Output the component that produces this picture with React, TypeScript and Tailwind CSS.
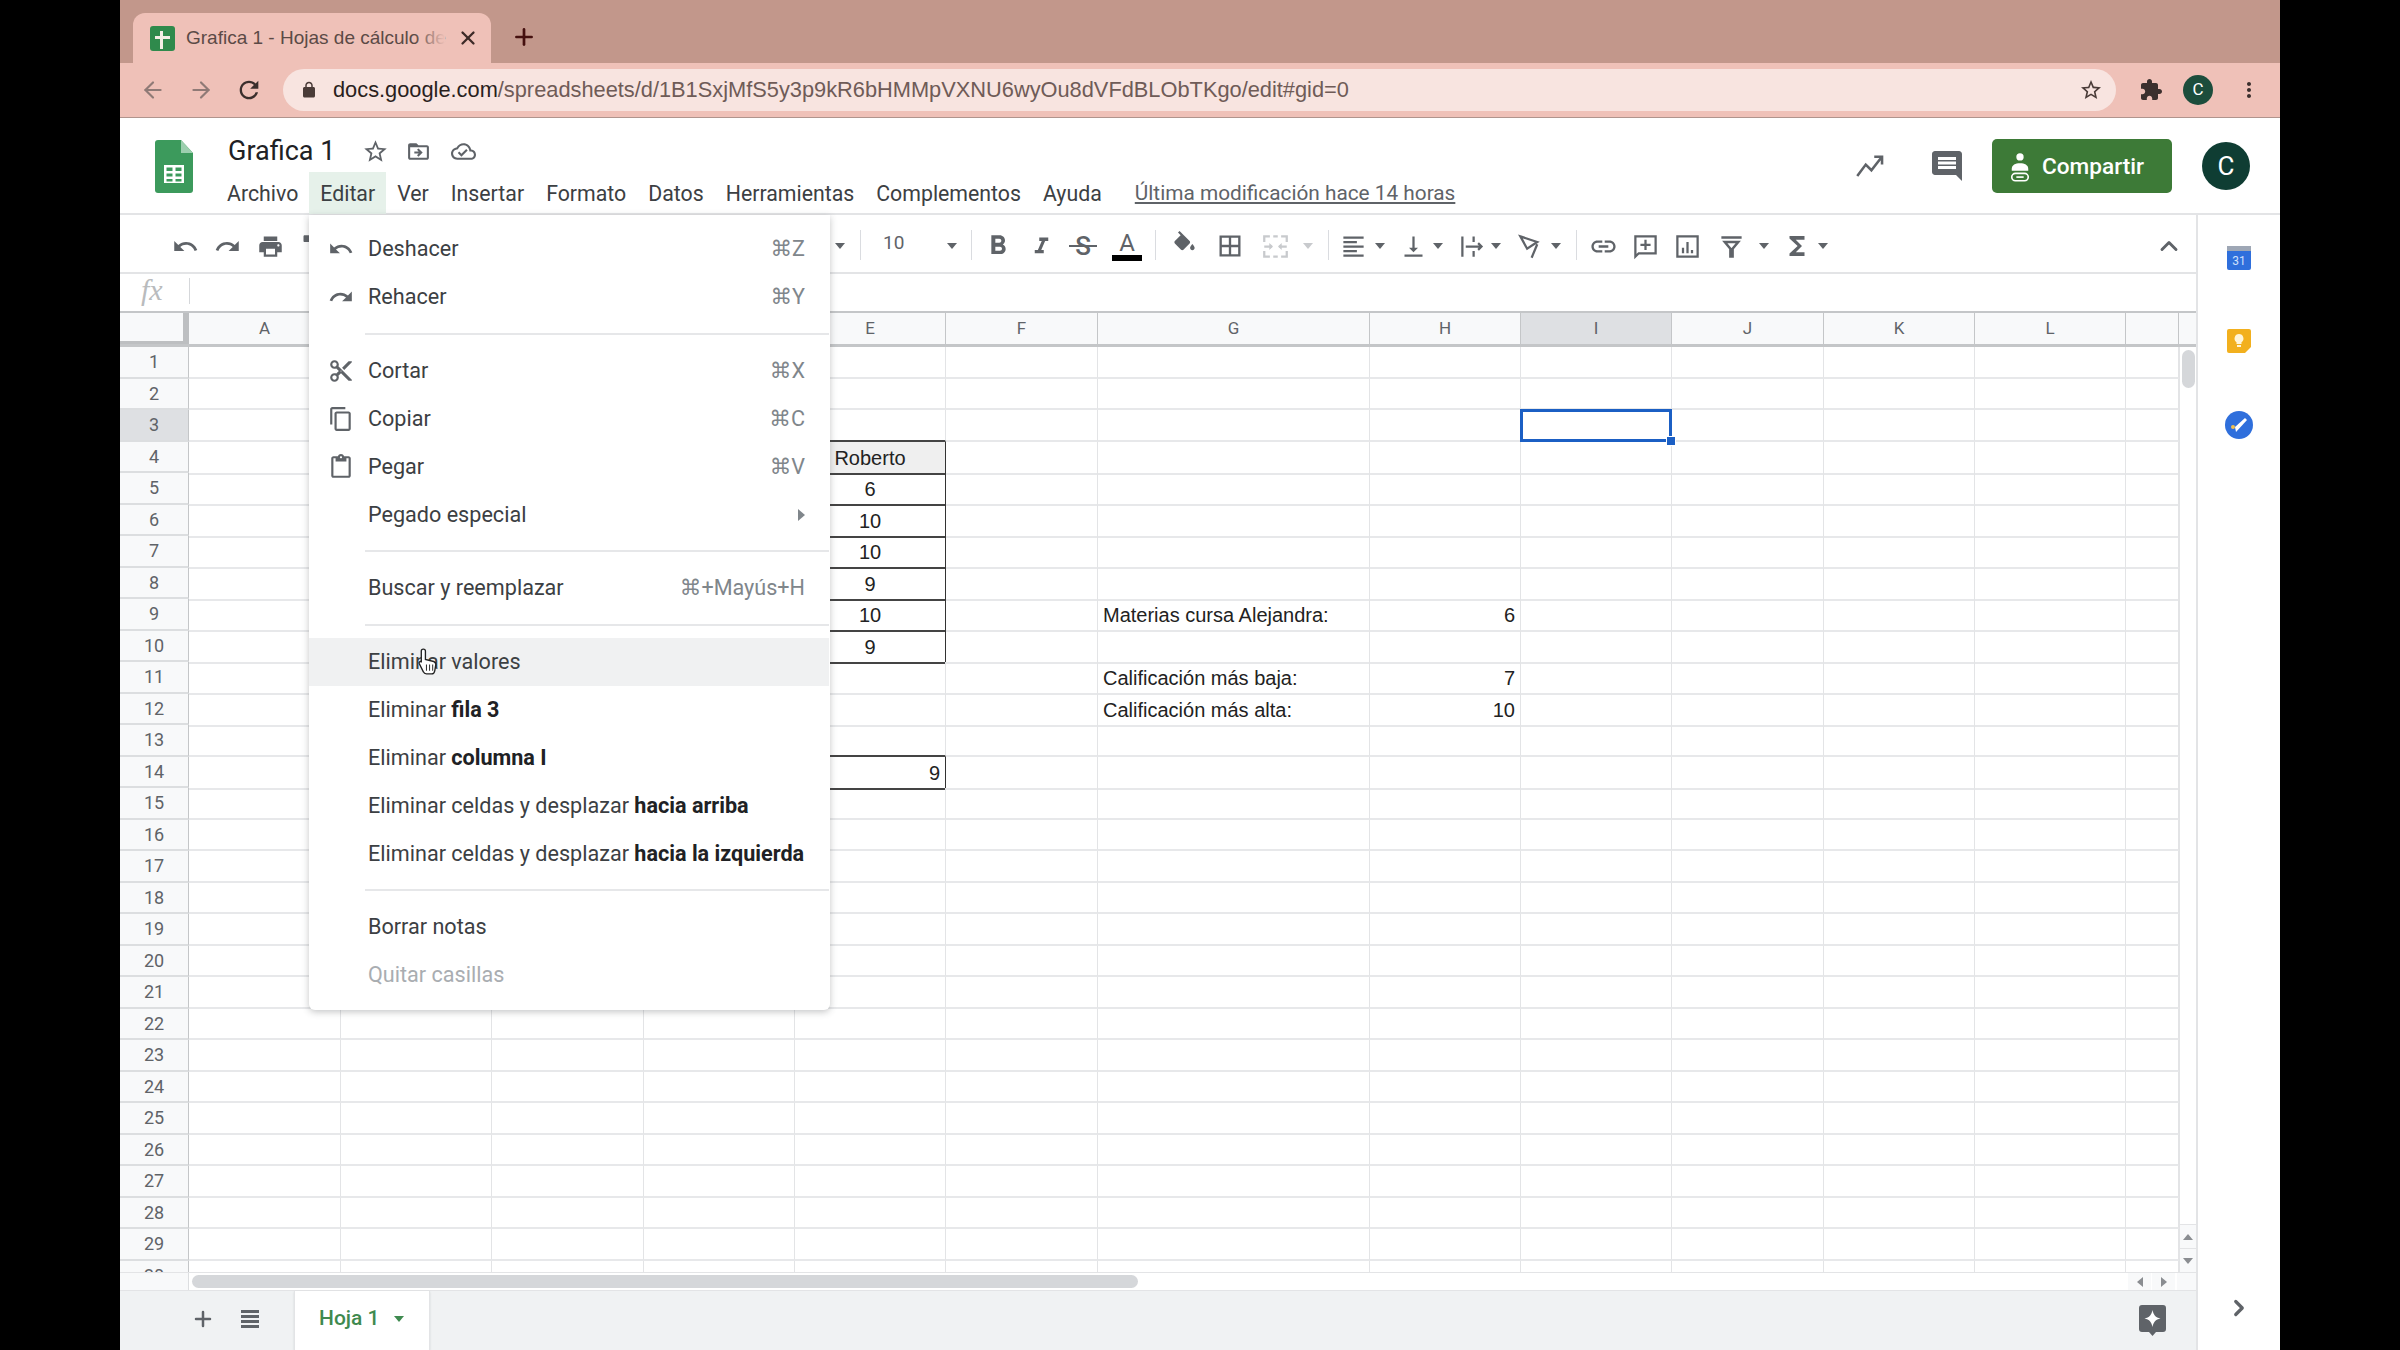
import React from 'react';
import { ArrowLeft, ArrowRight, ChevronRight, ChevronUp, Plus, X } from 'lucide-react';

const paths = {
  undo: 'M12.5 8c-2.65 0-5.05.99-6.9 2.6L2 7v9h9l-3.62-3.62c1.39-1.16 3.16-1.88 5.12-1.88 3.54 0 6.55 2.31 7.6 5.5l2.37-.78C21.08 11.03 17.15 8 12.5 8z',
  redo: 'M18.4 10.6C16.55 8.99 14.15 8 11.5 8c-4.65 0-8.58 3.03-9.96 7.22L3.9 16c1.05-3.19 4.05-5.5 7.6-5.5 1.95 0 3.73.72 5.12 1.88L13 16h9V7l-3.6 3.6z',
  print: 'M19 8H5c-1.66 0-3 1.34-3 3v6h4v4h12v-4h4v-6c0-1.66-1.34-3-3-3zm-3 11H8v-5h8v5zm3-7c-.55 0-1-.45-1-1s.45-1 1-1 1 .45 1 1-.45 1-1 1zm-1-9H6v4h12V3z',
  paint: 'M18 4V3c0-.55-.45-1-1-1H5c-.55 0-1 .45-1 1v4c0 .55.45 1 1 1h12c.55 0 1-.45 1-1V6h1v4H9v11c0 .55.45 1 1 1h2c.55 0 1-.45 1-1v-9h8V4h-3z',
  bold: 'M15.6 10.79c.97-.67 1.65-1.77 1.65-2.79 0-2.26-1.75-4-4-4H7v14h7.04c2.09 0 3.71-1.7 3.71-3.79 0-1.52-.86-2.82-2.15-3.42zM10 6.5h3c.83 0 1.5.67 1.5 1.5s-.67 1.5-1.5 1.5h-3v-3zm3.5 9H10v-3h3.5c.83 0 1.5.67 1.5 1.5s-.67 1.5-1.5 1.5z',
  italic: 'M10 4v3h2.21l-3.42 8H6v3h8v-3h-2.21l3.42-8H18V4z',
  fill: 'M16.56 8.94L7.62 0 6.21 1.41l2.38 2.38-5.15 5.15c-.59.59-.59 1.54 0 2.12l5.5 5.5c.29.29.68.44 1.06.44s.77-.15 1.06-.44l5.5-5.5c.59-.58.59-1.53 0-2.12zM19 11.5s-2 2.17-2 3.5c0 1.1.9 2 2 2s2-.9 2-2c0-1.33-2-3.5-2-3.5z',
  borders: 'M3 3v18h18V3H3zm8 16H5v-6h6v6zm0-8H5V5h6v6zm8 8h-6v-6h6v6zm0-8h-6V5h6v6z',
  align: 'M15 15H3v2h12v-2zm0-8H3v2h12V7zM3 13h18v-2H3v2zm0 8h18v-2H3v2zM3 3v2h18V3H3z',
  valign: 'M16 13h-3V3h-2v10H8l4 4 4-4zM4 19v2h16v-2H4z',
  link: 'M3.9 12c0-1.71 1.39-3.1 3.1-3.1h4V7H7c-2.76 0-5 2.24-5 5s2.24 5 5 5h4v-1.9H7c-1.71 0-3.1-1.39-3.1-3.1zM8 13h8v-2H8v2zm9-6h-4v1.9h4c1.71 0 3.1 1.39 3.1 3.1s-1.39 3.1-3.1 3.1h-4V17h4c2.76 0 5-2.24 5-5s-2.24-5-5-5z',
  sigma: 'M18 4H6v2l6.5 6L6 18v2h12v-3h-7l5-5-5-5h7z',
  comment: 'M21.99 4c0-1.1-.89-2-1.99-2H4c-1.1 0-2 .9-2 2v12c0 1.1.9 2 2 2h14l4 4-.01-18zM18 14H6v-2h12v2zm0-3H6V9h12v2zm0-3H6V6h12v2z',
  scissors: 'M9.64 7.64c.23-.5.36-1.05.36-1.64 0-2.21-1.79-4-4-4S2 3.79 2 6s1.79 4 4 4c.59 0 1.14-.13 1.64-.36L10 12l-2.36 2.36C7.14 14.13 6.59 14 6 14c-2.21 0-4 1.79-4 4s1.79 4 4 4 4-1.79 4-4c0-.59-.13-1.14-.36-1.64L12 14l7 7h3v-1L9.64 7.64zM6 8c-1.1 0-2-.89-2-2s.9-2 2-2 2 .89 2 2-.9 2-2 2zm0 12c-1.1 0-2-.89-2-2s.9-2 2-2 2 .89 2 2-.9 2-2 2zm6-7.5c-.28 0-.5-.22-.5-.5s.22-.5.5-.5.5.22.5.5-.22.5-.5.5zM19 3l-6 6 2 2 7-7V3z',
  copy: 'M16 1H4c-1.1 0-2 .9-2 2v14h2V3h12V1zm3 4H8c-1.1 0-2 .9-2 2v14c0 1.1.9 2 2 2h11c1.1 0 2-.9 2-2V7c0-1.1-.9-2-2-2zm0 16H8V7h11v14z',
  paste: 'M19 2h-4.18C14.4.84 13.3 0 12 0c-1.3 0-2.4.84-2.82 2H5c-1.1 0-2 .9-2 2v16c0 1.1.9 2 2 2h14c1.1 0 2-.9 2-2V4c0-1.1-.9-2-2-2zm-7 0c.55 0 1 .45 1 1s-.45 1-1 1-1-.45-1-1 .45-1 1-1zm7 18H5V4h2v3h10V4h2v16z',
  reload: 'M17.65 6.35C16.2 4.9 14.21 4 12 4c-4.42 0-7.99 3.58-7.99 8s3.57 8 7.99 8c3.73 0 6.84-2.55 7.73-6h-2.08c-.82 2.33-3.04 4-5.65 4-3.31 0-6-2.69-6-6s2.69-6 6-6c1.66 0 3.14.69 4.22 1.78L13 11h7V4l-2.35 2.35z',
  star: 'M22 9.24l-7.19-.62L12 2 9.19 8.63 2 9.24l5.46 4.73L5.82 21 12 17.27 18.18 21l-1.63-7.03L22 9.24zM12 15.4l-3.76 2.27 1-4.28-3.32-2.88 4.38-.38L12 6.1l1.71 4.04 4.38.38-3.32 2.88 1 4.28L12 15.4z',
  puzzle: 'M20.5 11H19V7c0-1.1-.9-2-2-2h-4V3.5C13 2.12 11.88 1 10.5 1S8 2.12 8 3.5V5H4c-1.1 0-1.99.9-1.99 2v3.8H3.5c1.49 0 2.7 1.21 2.7 2.7s-1.21 2.7-2.7 2.7H2V20c0 1.1.9 2 2 2h3.8v-1.5c0-1.49 1.21-2.7 2.7-2.7 1.49 0 2.7 1.21 2.7 2.7V22H17c1.1 0 2-.9 2-2v-4h1.5c1.38 0 2.5-1.12 2.5-2.5S21.88 11 20.5 11z',
  lock: 'M18 8h-1V6c0-2.76-2.24-5-5-5S7 3.24 7 6v2H6c-1.1 0-2 .9-2 2v10c0 1.1.9 2 2 2h12c1.1 0 2-.9 2-2V10c0-1.1-.9-2-2-2zM9 6c0-1.66 1.34-3 3-3s3 1.34 3 3v2H9V6z',
  cloud: 'M19.35 10.04C18.67 6.59 15.64 4 12 4 9.11 4 6.6 5.64 5.35 8.04 2.34 8.36 0 10.91 0 14c0 3.31 2.69 6 6 6h13c2.76 0 5-2.24 5-5 0-2.64-2.05-4.78-4.65-4.96zM19 18H6c-2.21 0-4-1.79-4-4 0-2.05 1.53-3.76 3.56-3.97l1.07-.11.5-.95C8.08 7.14 9.94 6 12 6c2.62 0 4.88 1.86 5.39 4.43l.3 1.5 1.53.11c1.56.1 2.78 1.41 2.78 2.96 0 1.65-1.35 3-3 3zm-9-3.82l-2.09-2.09L6.5 13.5 10 17l6.01-6.01-1.41-1.41z',
  folder: 'M20 6h-8l-2-2H4c-1.1 0-2 .9-2 2v12c0 1.1.9 2 2 2h16c1.1 0 2-.9 2-2V8c0-1.1-.9-2-2-2zm0 12H4V8h16v10zm-8.01-9l-1.41 1.41L12.16 12H8v2h4.16l-1.59 1.59L11.99 17 16 13.01 11.99 9z',
  more: 'M12 8c1.1 0 2-.9 2-2s-.9-2-2-2-2 .9-2 2 .9 2 2 2zm0 2c-1.1 0-2 .9-2 2s.9 2 2 2 2-.9 2-2-.9-2-2-2zm0 6c-1.1 0-2 .9-2 2s.9 2 2 2 2-.9 2-2-.9-2-2-2z',
};

function Icon({ d, className }: { d: string; className?: string }) {
  return (
    <svg viewBox="0 0 24 24" fill="currentColor" className={className}>
      <path d={d} />
    </svg>
  );
}

function Caret({ className = 'border-t-[#5f6368]' }: { className?: string }) {
  return <span className={`block w-0 h-0 border-x-[5px] border-x-transparent border-t-[6px] ${className}`} />;
}

function Tb({ className, children }: { className: string; children?: React.ReactNode }) {
  return <div className={`flex items-center justify-center h-full shrink-0 ${className}`}>{children}</div>;
}

function Sep({ className }: { className: string }) {
  return <div className={`w-px h-[30px] bg-[#dadce0] shrink-0 ${className}`} />;
}

function BrowserBar() {
  return (
    <>
      <div className="flex h-[63px] bg-[#c2978b] pl-[13px] pt-[13px] items-start">
        <div className="flex items-center w-[358px] h-[50px] bg-[#efc1b8] rounded-t-[12px] pl-[17px]">
          <svg viewBox="0 0 25 25" className="w-[25px] h-[25px]">
            <rect width="25" height="25" rx="3" fill="#2f8a4c" />
            <path d="M10 5h3v5h7v3h-7v10h-3V13H5v-3h5z" fill="#f3eee6" />
          </svg>
          <div className="relative w-[259px] ml-[11px] whitespace-nowrap text-[19px] text-[#5b4a46] font-['Liberation_Sans',sans-serif]">
            Grafica 1 - Hojas de cálculo de
            <div className="absolute right-0 top-0 bottom-0 w-[30px] bg-gradient-to-r from-transparent to-[#efc1b8]" />
          </div>
          <X className="w-[22px] h-[22px] ml-[12px] text-[#3d2a27]" strokeWidth={2.5} />
        </div>
        <Plus className="w-[26px] h-[26px] ml-[20px] mt-[11px] text-[#45100f]" strokeWidth={2.5} />
      </div>
      <div className="flex items-center h-[55px] bg-[#efc1b8] pl-[9px] border-b border-[#b0948d]">
        <Tb className="w-[48px]"><ArrowLeft className="w-[26px] h-[26px] text-[#8f7a76]" /></Tb>
        <Tb className="w-[48px]"><ArrowRight className="w-[26px] h-[26px] text-[#8f7a76]" /></Tb>
        <Tb className="w-[48px]"><Icon d={paths.reload} className="w-[28px] h-[28px] text-[#3b2f2d]" /></Tb>
        <div className="flex items-center w-[1833px] h-[42px] ml-[10px] rounded-full bg-[#f8e4e0] pl-[17px] pr-[13px]">
          <Icon d={paths.lock} className="w-[18px] h-[18px] text-[#4a3b38]" />
          <div className="ml-[15px] text-[21.8px] text-[#6f5b57] whitespace-nowrap font-['Liberation_Sans',sans-serif]">
            <span className="text-[#2a1f1d]">docs.google.com</span>/spreadsheets/d/1B1SxjMfS5y3p9kR6bHMMpVXNU6wyOu8dVFdBLObTKgo/edit#gid=0
          </div>
          <Icon d={paths.star} className="w-[24px] h-[24px] ml-auto text-[#4a3b38]" />
        </div>
        <Tb className="w-[48px] ml-[11px]"><Icon d={paths.puzzle} className="w-[24px] h-[24px] text-[#3b2f2d]" /></Tb>
        <Tb className="w-[46px]">
          <div className="flex items-center justify-center w-[30px] h-[30px] rounded-full bg-[#1c4d3c] text-white text-[17px] font-['Roboto',sans-serif]">C</div>
        </Tb>
        <Tb className="w-[46px] ml-[5px]"><Icon d={paths.more} className="w-[24px] h-[24px] text-[#3b2f2d]" /></Tb>
      </div>
    </>
  );
}

const menuBar = ['Archivo', 'Editar', 'Ver', 'Insertar', 'Formato', 'Datos', 'Herramientas', 'Complementos', 'Ayuda'];

function DocsHeader() {
  return (
    <div className="flex items-start h-[97px] bg-white border-b-2 border-[#e3e4e6] pl-[35px] font-['Roboto',sans-serif]">
      <svg viewBox="0 0 38 53" className="w-[38px] h-[53px] mt-[22px] shrink-0">
        <path d="M3 0h23l12 13v37a3 3 0 0 1-3 3H3a3 3 0 0 1-3-3V3a3 3 0 0 1 3-3z" fill="#3c9a5c" />
        <path d="M26 0l12 13H26z" fill="#9ccfae" />
        <path d="M9 25h20v18H9zm2.500 2.500v3.500h6v-3.500zm9 0v3.500h6v-3.500zm-9 6v3h6v-3zm9 0v3h6v-3zm-9 5.500v2.500h6V39zm9 0v2.500h6V39z" fill="#ffffff" fillRule="evenodd" />
      </svg>
      <div className="ml-[23px] pt-[13px]">
        <div className="flex items-center h-[40px] pl-[12px]">
          <span className="text-[27px] text-[#202124]">Grafica 1</span>
          <Icon d={paths.star} className="w-[27px] h-[27px] ml-[27px] text-[#5f6368]" />
          <Icon d={paths.folder} className="w-[25px] h-[25px] ml-[17px] text-[#5f6368]" />
          <Icon d={paths.cloud} className="w-[25px] h-[25px] ml-[20px] text-[#5f6368]" />
        </div>
        <div className="flex items-center h-[42px] mt-px text-[21.3px] text-[#3c4043]">
          {menuBar.map((m) => (
            <div key={m} className={`flex items-center h-full px-[11px] pt-[2px] ${m === 'Editar' ? 'bg-[#e6f1ea]' : ''}`}>{m}</div>
          ))}
          <span className="ml-[22px] pt-[2px] underline text-[20.8px] text-[#5f6368]">Última modificación hace 14 horas</span>
        </div>
      </div>
      <div className="flex items-center ml-auto mt-[21px]">
        <Tb className="w-[48px] h-[54px]">
          <svg viewBox="0 0 24 24" className="w-[34px] h-[34px] text-[#5f6368]" fill="none" stroke="currentColor" strokeWidth="1.800">
            <path d="M3 19l6-8 4 4 7-9M15 5.500h5.500V11" />
          </svg>
        </Tb>
        <Tb className="w-[48px] h-[54px] ml-[29px]"><Icon d={paths.comment} className="w-[36px] h-[36px] text-[#5f6368]" /></Tb>
        <div className="flex items-center w-[180px] h-[54px] ml-[21px] rounded-[5px] bg-[#3d7a37] pl-[17px] pt-px text-white text-[22.6px] font-medium">
          <svg viewBox="0 0 24 32" className="w-[22px] h-[30px] mr-[11px]" fill="#ffffff">
            <circle cx="12" cy="5" r="4" />
            <path d="M3 18c0-4 4-6 9-6s9 2 9 6v2H3z" />
            <rect x="3" y="23" width="18" height="8" rx="4" fill="none" stroke="#ffffff" strokeWidth="1.800" />
            <path d="M8 27h8" stroke="#ffffff" strokeWidth="1.800" />
          </svg>
          Compartir
        </div>
        <div className="flex items-center justify-center w-[48px] h-[48px] ml-[30px] mr-[30px] rounded-full bg-[#0f3d33] text-white text-[26px]">C</div>
      </div>
    </div>
  );
}

function Toolbar() {
  const ic = 'w-[27px] h-[27px] text-[#5f6368]';
  return (
    <div className="flex items-center h-[59px] border-b-2 border-[#e3e4e6] pl-[44px] pr-[7px] pt-[5px] font-['Roboto',sans-serif]">
      <Tb className="w-[42px]"><Icon d={paths.undo} className={ic} /></Tb>
      <Tb className="w-[43px]"><Icon d={paths.redo} className={ic} /></Tb>
      <Tb className="w-[42px]"><Icon d={paths.print} className={ic} /></Tb>
      <Tb className="w-[42px]"><Icon d={paths.paint} className={ic} /></Tb>
      <Tb className="w-[499px]" />
      <Tb className="w-[16px]"><Caret /></Tb>
      <Sep className="ml-[12px] -mt-[3px]" />
      <Tb className="w-[82px] justify-start pl-[22px] pb-[5px] text-[19px] text-[#5f6368]">10</Tb>
      <Tb className="w-[18px]"><Caret /></Tb>
      <Sep className="ml-[10px] -mt-[3px]" />
      <Tb className="w-[44px] ml-[4px]"><Icon d={paths.bold} className="w-[32px] h-[32px] text-[#5f6368]" /></Tb>
      <Tb className="w-[42px]"><Icon d={paths.italic} className={ic} /></Tb>
      <Tb className="w-[42px]">
        <div className="relative flex items-center justify-center text-[26px] leading-none font-medium text-[#5f6368]">
          S
          <span className="absolute left-[-6px] right-[-6px] top-[12px] h-[2px] bg-[#5f6368]" />
        </div>
      </Tb>
      <Tb className="w-[46px] flex-col">
        <span className="text-[24px] leading-[24px] text-[#5f6368]">A</span>
        <span className="block w-[30px] h-[6px] bg-black" />
      </Tb>
      <Sep className="ml-[5px] -mt-[3px]" />
      <Tb className="w-[44px] ml-[6px] pb-[3px]"><Icon d={paths.fill} className={ic} /></Tb>
      <Tb className="w-[48px]"><Icon d={paths.borders} className="w-[28px] h-[28px] text-[#5f6368]" /></Tb>
      <Tb className="w-[42px]">
        <svg viewBox="0 0 24 24" className="w-[27px] h-[27px] text-[#c8cacd]" fill="none" stroke="currentColor" strokeWidth="2">
          <path d="M2 8V3h5M17 3h5v5M2 16v5h5M17 21h5v-5M10 3h4M10 21h4M2 12h7M22 12h-7" />
          <path d="M9 12l-2-2v4zM15 12l2-2v4z" fill="currentColor" strokeWidth="1" />
        </svg>
      </Tb>
      <Tb className="w-[24px]"><Caret className="border-t-[#c8cacd]" /></Tb>
      <Sep className="ml-[8px] -mt-[3px]" />
      <Tb className="w-[38px] ml-[5px]"><Icon d={paths.align} className={ic} /></Tb>
      <Tb className="w-[16px]"><Caret /></Tb>
      <Tb className="w-[34px] ml-[8px]"><Icon d={paths.valign} className={ic} /></Tb>
      <Tb className="w-[16px]"><Caret /></Tb>
      <Tb className="w-[36px] ml-[8px]">
        <svg viewBox="0 0 24 24" className="w-[27px] h-[27px] text-[#5f6368]" fill="none" stroke="currentColor" strokeWidth="2">
          <path d="M3 3v18M13 3v5M13 16v5M6 12h14M17 9l3 3-3 3" />
        </svg>
      </Tb>
      <Tb className="w-[12px]"><Caret /></Tb>
      <Tb className="w-[32px] ml-[12px]">
        <svg viewBox="0 0 24 24" className="w-[27px] h-[27px] text-[#5f6368]" fill="none" stroke="currentColor" strokeWidth="2">
          <path d="M3 3l15 5-9 6zM18 10l-5 12" />
        </svg>
      </Tb>
      <Tb className="w-[16px] ml-[2px]"><Caret /></Tb>
      <Sep className="ml-[12px] -mt-[3px]" />
      <Tb className="w-[34px] ml-[9px]"><Icon d={paths.link} className="w-[29px] h-[29px] text-[#5f6368]" /></Tb>
      <Tb className="w-[42px] ml-[4px]">
        <svg viewBox="0 0 24 24" className="w-[27px] h-[27px] text-[#5f6368]" fill="none" stroke="currentColor" strokeWidth="2">
          <path d="M3 3h18v15H6l-3 3zM12 6v9M7.500 10.500h9" />
        </svg>
      </Tb>
      <Tb className="w-[42px]">
        <svg viewBox="0 0 24 24" className="w-[27px] h-[27px] text-[#5f6368]" fill="none" stroke="currentColor" strokeWidth="2">
          <rect x="3" y="3" width="18" height="18" />
          <path d="M8 18v-5M12 18V8M16 18v-3" />
        </svg>
      </Tb>
      <Tb className="w-[42px] ml-[2px]">
        <svg viewBox="0 0 24 24" className="w-[27px] h-[27px] text-[#5f6368]" fill="none" stroke="currentColor" strokeWidth="2.200">
          <path d="M3 4h18M6 8h12l-5 6v7h-2v-7z" />
        </svg>
      </Tb>
      <Tb className="w-[16px] ml-[4px]"><Caret /></Tb>
      <Tb className="w-[34px] ml-[8px]"><Icon d={paths.sigma} className="w-[30px] h-[30px] text-[#5f6368]" /></Tb>
      <Tb className="w-[16px] ml-px"><Caret /></Tb>
      <Tb className="w-[40px] ml-auto"><ChevronUp className="w-[28px] h-[28px] text-[#5f6368]" strokeWidth={2.5} /></Tb>
    </div>
  );
}

const letters = ['A', 'B', 'C', 'D', 'E', 'F', 'G', 'H', 'I', 'J', 'K', 'L', ''];
const gridCols = 'grid grid-cols-[152px_151px_152px_151px_151px_152px_272px_151px_151px_152px_151px_151px_53px]';

type CellDef = { t: string; a: 'l' | 'c' | 'r' };
const cells: Record<string, CellDef> = {
  '4-4': { t: 'Roberto', a: 'c' },
  '5-4': { t: '6', a: 'c' },
  '6-4': { t: '10', a: 'c' },
  '7-4': { t: '10', a: 'c' },
  '8-4': { t: '9', a: 'c' },
  '9-4': { t: '10', a: 'c' },
  '10-4': { t: '9', a: 'c' },
  '14-4': { t: '9', a: 'r' },
  '9-6': { t: 'Materias cursa Alejandra:', a: 'l' },
  '9-7': { t: '6', a: 'r' },
  '11-6': { t: 'Calificación más baja:', a: 'l' },
  '11-7': { t: '7', a: 'r' },
  '12-6': { t: 'Calificación más alta:', a: 'l' },
  '12-7': { t: '10', a: 'r' },
};

function Cell({ row, col }: { row: number; col: number }) {
  const def = cells[`${row}-${col}`];
  const boxed = col === 4 && ((row >= 4 && row <= 10) || row === 14);
  const topOfBox = col === 4 && (row === 3 || row === 13);
  const align = def?.a === 'c' ? 'justify-center' : def?.a === 'r' ? 'justify-end pr-[5px]' : 'justify-start pl-[5px]';
  return (
    <div
      className={`relative flex items-center min-w-0 pt-px whitespace-nowrap border-b-2 border-r text-[20px] text-[#222222] ${align}
        ${boxed ? 'border-r-[#333333]' : 'border-r-[#e3e4e6]'}
        ${boxed || topOfBox ? 'border-b-[#444444]' : 'border-b-[#e7e8ea]'}
        ${row === 4 && col === 4 ? 'bg-[#efefef]' : ''}`}
    >
      {def?.t}
      {row === 3 && col === 8 && (
        <div className="absolute z-10 left-[-1px] top-[-1px] right-[-1px] bottom-[-2px] border-[3px] border-[#1b5fc4]">
          <span className="absolute right-[-7px] bottom-[-7px] w-[10px] h-[10px] bg-[#1b5fc4] border border-white" />
        </div>
      )}
    </div>
  );
}

function Sheet() {
  const rows = Array.from({ length: 30 }, (_, i) => i + 1);
  return (
    <div className="flex-1 min-h-0 flex flex-col font-['Liberation_Sans',sans-serif]">
      {/* column letters */}
      <div className="flex h-[36px] border-t-2 border-b-[3px] border-[#c4c6c8] bg-[#f8f9fa] text-[17px] text-[#5f6368] font-['Roboto',sans-serif]">
        <div className="w-[69px] shrink-0 border-r-[6px] border-b-[3px] border-[#bdbfc1]" />
        <div className={`${gridCols} flex-1`}>
          {letters.map((l, i) => (
            <div key={i} className={`flex items-center justify-center border-r border-[#c4c6c8] ${l === 'I' ? 'bg-[#dee0e3]' : ''}`}>{l}</div>
          ))}
        </div>
        <div className="w-[17px] shrink-0" />
      </div>
      <div className="flex h-[925px] overflow-hidden">
        <div className="flex-1 min-w-0">
          {rows.map((r) => (
            <div key={r} className="flex h-[31.5px]">
              <div className={`flex items-center justify-center w-[69px] shrink-0 border-r border-b-2 border-r-[#c4c6c8] border-b-[#dcdee0] text-[18px] text-[#5f6368] font-['Roboto',sans-serif] ${r === 3 ? 'bg-[#dee0e3]' : 'bg-[#f8f9fa]'}`}>
                {r}
              </div>
              <div className={`${gridCols} flex-1`}>
                {letters.map((_, c) => <Cell key={c} row={r} col={c} />)}
              </div>
            </div>
          ))}
        </div>
        {/* vertical scrollbar */}
        <div className="flex flex-col w-[17px] shrink-0 border-l border-[#e3e4e6] items-center pt-[3px]">
          <div className="w-[13px] h-[38px] rounded-full bg-[#d5d7da]" />
          <div className="flex items-center justify-center w-full h-[24px] mt-auto border-t border-[#e3e4e6] bg-[#f8f9fa]">
            <span className="w-0 h-0 border-x-[5px] border-x-transparent border-b-[6px] border-b-[#8a8d91]" />
          </div>
          <div className="flex items-center justify-center w-full h-[24px] border-t border-[#e3e4e6] bg-[#f8f9fa]">
            <Caret className="border-t-[#8a8d91]" />
          </div>
        </div>
      </div>
      {/* horizontal scrollbar */}
      <div className="flex items-center h-[18px] border-t border-[#e3e4e6]">
        <div className="w-[69px] h-full shrink-0 border-r border-[#dcdee0] bg-[#f8f9fa]" />
        <div className="w-[946px] h-[13px] ml-[3px] rounded-full bg-[#d5d7da]" />
        <div className="flex items-center justify-center w-[23px] h-full ml-auto bg-[#f8f9fa]">
          <span className="w-0 h-0 border-y-[5px] border-y-transparent border-r-[6px] border-r-[#8a8d91]" />
        </div>
        <div className="flex items-center justify-center w-[23px] h-full ml-px bg-[#f8f9fa]">
          <span className="w-0 h-0 border-y-[5px] border-y-transparent border-l-[6px] border-l-[#8a8d91]" />
        </div>
        <div className="w-[19px] h-full ml-[2px] bg-[#f8f9fa]" />
      </div>
      {/* sheet tabs */}
      <div className="flex items-stretch h-[60px] bg-[#f0f2f3] pl-[60px] pr-[30px] border-t border-[#e3e4e6] font-['Roboto',sans-serif]">
        <Tb className="w-[46px] pb-[3px]"><Plus className="w-[24px] h-[24px] text-[#5f6368]" strokeWidth={2.5} /></Tb>
        <Tb className="w-[48px] pb-[3px]">
          <svg viewBox="0 0 18 18" className="w-[18px] h-[18px] text-[#5f6368]" fill="currentColor">
            <path d="M0 0h18v3H0zM0 5h18v3H0zM0 10h18v3H0zM0 15h18v3H0z" />
          </svg>
        </Tb>
        <div className="flex items-center w-[136px] ml-[20px] pb-[3px] bg-white pl-[24px] border-x border-[#e3e4e6] shadow-[0_1px_2px_rgba(60,64,67,0.15)] text-[21px] font-medium text-[#3f8a4f]">
          Hoja 1
          <Caret className="ml-[14px] border-t-[#3f8a4f]" />
        </div>
        <div className="ml-auto flex items-center">
          <svg viewBox="0 0 27 31" className="w-[27px] h-[31px]">
            <path d="M3 0h21a3 3 0 0 1 3 3v21a3 3 0 0 1-3 3h-7l-3.500 4-3.500-4H3a3 3 0 0 1-3-3V3a3 3 0 0 1 3-3z" fill="#5f6368" />
            <path d="M13.500 5c1 5 3 7.500 8 8.500-5 1-7 3.500-8 8.500-1-5-3-7.500-8-8.500 5-1 7-3.500 8-8.500z" fill="#ffffff" />
          </svg>
        </div>
      </div>
    </div>
  );
}

function SidePanel() {
  return (
    <div className="flex flex-col items-center w-[84px] bg-white border-l-2 border-[#e3e4e6] pt-[30px]">
      <svg viewBox="0 0 24 24" className="w-[24px] h-[26px]">
        <rect width="24" height="24" rx="2" fill="#2f6fdc" />
        <rect width="24" height="5" fill="#9ea7b5" />
        <text x="12" y="19" fontSize="12" textAnchor="middle" fill="#cfe0fb" fontFamily="Roboto">31</text>
      </svg>
      <svg viewBox="0 0 24 24" className="w-[24px] h-[24px] mt-[58px]">
        <path d="M2 0h20a2 2 0 0 1 2 2v16l-6 6H2a2 2 0 0 1-2-2V2a2 2 0 0 1 2-2z" fill="#f2b01e" />
        <path d="M12 5a4.500 4.500 0 0 0-2.500 8.200V15h5v-1.800A4.500 4.500 0 0 0 12 5zM10 16h4v2h-4z" fill="#fff5d9" />
      </svg>
      <svg viewBox="0 0 28 28" className="w-[28px] h-[28px] mt-[58px]">
        <circle cx="14" cy="14" r="14" fill="#2f6fdc" />
        <path d="M11 21l11-12-2-2-10 9z" fill="#ffffff" />
        <circle cx="8" cy="16" r="2" fill="#f2c14e" />
      </svg>
      <ChevronRight className="w-[26px] h-[26px] mt-auto mb-[29px] text-[#5f6368]" strokeWidth={3} />
    </div>
  );
}

type MenuRow =
  | { sep: true }
  | { label: React.ReactNode; icon?: string; key?: string; arrow?: boolean; hover?: boolean; disabled?: boolean };

const menuRows: MenuRow[] = [
  { label: 'Deshacer', icon: paths.undo, key: '⌘Z' },
  { label: 'Rehacer', icon: paths.redo, key: '⌘Y' },
  { sep: true },
  { label: 'Cortar', icon: paths.scissors, key: '⌘X' },
  { label: 'Copiar', icon: paths.copy, key: '⌘C' },
  { label: 'Pegar', icon: paths.paste, key: '⌘V' },
  { label: 'Pegado especial', arrow: true },
  { sep: true },
  { label: 'Buscar y reemplazar', key: '⌘+Mayús+H' },
  { sep: true },
  { label: 'Eliminar valores', hover: true },
  { label: <>Eliminar <b className="font-bold text-[#202124]">fila 3</b></> },
  { label: <>Eliminar <b className="font-bold text-[#202124]">columna I</b></> },
  { label: <>Eliminar celdas y desplazar <b className="font-bold text-[#202124]">hacia arriba</b></> },
  { label: <>Eliminar celdas y desplazar <b className="font-bold text-[#202124]">hacia la izquierda</b></> },
  { sep: true },
  { label: 'Borrar notas' },
  { label: 'Quitar casillas', disabled: true },
];

function EditMenu() {
  return (
    <div className="absolute left-[309px] top-[215px] w-[521px] bg-white rounded-b-[6px] pt-[10px] pb-[11px] pr-px shadow-[0_2px_7px_rgba(60,64,67,0.3)] text-[21.6px] font-['Roboto','DejaVu_Sans',sans-serif]">
      {menuRows.map((m, i) =>
        'sep' in m ? (
          <div key={i} className="h-[2px] ml-[56px] my-[11.75px] bg-[#e6e7e9]" />
        ) : (
          <div key={i} className={`flex items-center h-[48px] pr-[24px] ${m.hover ? 'bg-[#f0f1f2]' : ''} ${m.disabled ? 'text-[#a9adb1]' : 'text-[#3c4043]'}`}>
            <div className="flex justify-end w-[59px] pr-[14px] shrink-0">
              {m.icon && <Icon d={m.icon} className="w-[26px] h-[26px] text-[#5f6368]" />}
            </div>
            <span className="whitespace-nowrap pt-px">{m.label}</span>
            {m.key && <span className="ml-auto pt-px text-[#80868b]">{m.key}</span>}
            {m.arrow && <span className="ml-auto w-0 h-0 border-y-[6px] border-y-transparent border-l-[7px] border-l-[#80868b]" />}
          </div>
        )
      )}
    </div>
  );
}

export default function App() {
  return (
    <div className="relative flex justify-center w-[2400px] h-[1350px] bg-black overflow-hidden">
      <div className="flex flex-col w-[2160px] h-full bg-white">
        <BrowserBar />
        <DocsHeader />
        <div className="flex flex-1 min-h-0">
          <div className="flex flex-col w-[2076px]">
            <Toolbar />
            <div className="flex items-center h-[37px] font-['Liberation_Serif',serif]">
              <span className="w-[69px] pl-[21px] pb-[6px] text-[30px] italic text-[#b9bbbd]">fx</span>
              <div className="w-px h-[26px] mb-[4px] bg-[#d5d7da]" />
            </div>
            <Sheet />
          </div>
          <SidePanel />
        </div>
      </div>
      <EditMenu />
      {/* mouse pointer */}
      <svg viewBox="0 0 20 28" className="absolute left-[417px] top-[647px] w-[21px] h-[29px]">
        <path d="M6 2c1.500 0 2 1 2 2v8l8 2c1.500.5 2 1.500 2 3l-1 6c-.3 1.500-1 3-3 3H9c-1.500 0-2.500-.8-3-2l-4-8c-.5-1.500 1-2.500 2-1.500L4 15V4c0-1 .5-2 2-2z" fill="#ffffff" stroke="#222222" strokeWidth="1.300" />
        <path d="M9 17v6M12 17v6M15 17v6" stroke="#333333" strokeWidth="1" />
      </svg>
    </div>
  );
}
